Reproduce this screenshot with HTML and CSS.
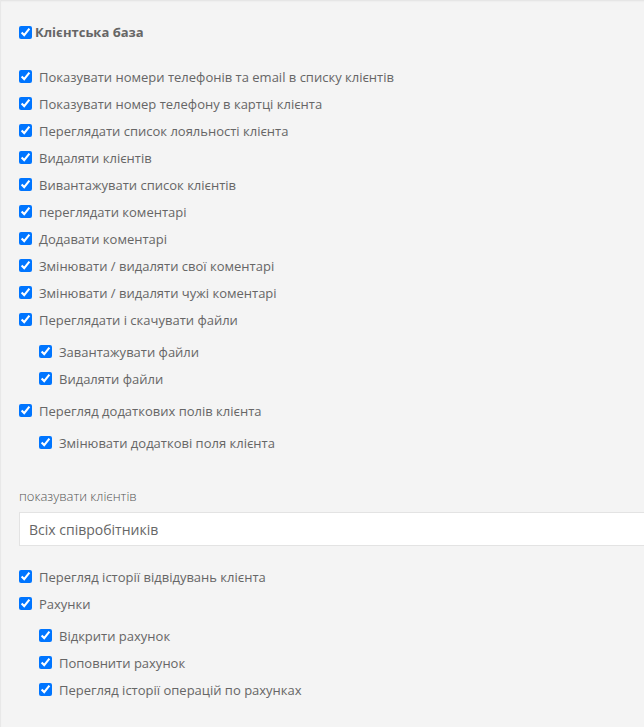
FILE: index.html
```html
<!DOCTYPE html>
<html lang="uk">
<head>
<meta charset="utf-8">
<link rel="stylesheet" href="styles.css">
</head>
<body>
<div class="panel">
  <label class="title"><input type="checkbox" checked><span>Клієнтська база</span></label>
  <div class="list">
    <label class="row"><input type="checkbox" checked><span>Показувати номери телефонів та email в списку клієнтів</span></label>
    <label class="row"><input type="checkbox" checked><span>Показувати номер телефону в картці клієнта</span></label>
    <label class="row"><input type="checkbox" checked><span>Переглядати список лояльності клієнта</span></label>
    <label class="row"><input type="checkbox" checked><span>Видаляти клієнтів</span></label>
    <label class="row"><input type="checkbox" checked><span>Вивантажувати список клієнтів</span></label>
    <label class="row"><input type="checkbox" checked><span>переглядати коментарі</span></label>
    <label class="row"><input type="checkbox" checked><span>Додавати коментарі</span></label>
    <label class="row"><input type="checkbox" checked><span>Змінювати / видаляти свої коментарі</span></label>
    <label class="row"><input type="checkbox" checked><span>Змінювати / видаляти чужі коментарі</span></label>
    <label class="row"><input type="checkbox" checked><span>Переглядати і скачувати файли</span></label>
    <div class="sub">
      <label class="row"><input type="checkbox" checked><span>Завантажувати файли</span></label>
      <label class="row"><input type="checkbox" checked><span>Видаляти файли</span></label>
    </div>
    <label class="row"><input type="checkbox" checked><span>Перегляд додаткових полів клієнта</span></label>
    <div class="sub">
      <label class="row"><input type="checkbox" checked><span>Змінювати додаткові поля клієнта</span></label>
    </div>
  </div>
  <div class="field">
    <div class="field-label">показувати клієнтів</div>
    <div class="select">Всіх співробітників</div>
  </div>
  <div class="list">
    <label class="row"><input type="checkbox" checked><span>Перегляд історії відвідувань клієнта</span></label>
    <label class="row"><input type="checkbox" checked><span>Рахунки</span></label>
    <div class="sub">
      <label class="row"><input type="checkbox" checked><span>Відкрити рахунок</span></label>
      <label class="row"><input type="checkbox" checked><span>Поповнити рахунок</span></label>
      <label class="row"><input type="checkbox" checked><span>Перегляд історії операцій по рахунках</span></label>
    </div>
  </div>
</div>
</body>
</html>
```
FILE: styles.css
```css
html, body {
  margin: 0;
  padding: 0;
  background: #ffffff;
  overflow: hidden;
}
body {
  font-family: "Open Sans", "Liberation Sans", sans-serif;
  font-size: 13px;
  color: #666;
}
.panel {
  width: 680px;
  background: #f4f4f4;
  border-left: 1px solid #e8e8e8;
  border-bottom: 1px solid #e2e2e2;
  box-shadow: inset 0 2px 2px -1px rgba(0,0,0,0.08);
  padding: 19px 0 21px 14px;
  box-sizing: border-box;
}
.title {
  display: flex;
  align-items: center;
  height: 26px;
  font-weight: bold;
  font-size: 13px;
  color: #666;
}
.title input {
  margin: 0 3px 0 4px;
}
.list {
  display: flex;
  flex-direction: column;
}
.title + .list {
  margin-top: 18px;
}
.row {
  display: flex;
  align-items: center;
  height: 27px;
}
.row input {
  margin: 0 7px 0 4px;
  flex: none;
}
.sub {
  padding-left: 20px;
  margin: 5px 0;
  display: flex;
  flex-direction: column;
}
.field {
  margin-top: 26px;
  padding-left: 4px;
}
.field-label {
  font-size: 13px;
  font-weight: 300;
  color: #555;
  line-height: 18px;
}
.select {
  margin-top: 7px;
  height: 34px;
  box-sizing: border-box;
  background: #fff;
  border: 1px solid #e3e3e3;
  padding: 0 9px;
  display: flex;
  align-items: center;
  font-size: 14px;
  color: #666;
}
.field + .list {
  margin-top: 17px;
}
```
